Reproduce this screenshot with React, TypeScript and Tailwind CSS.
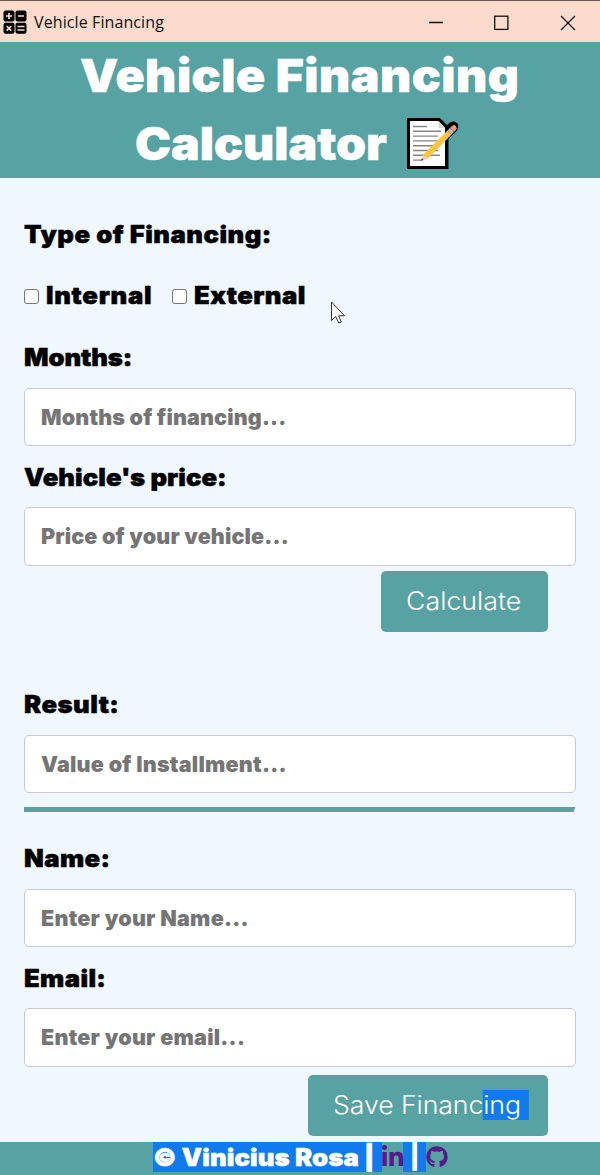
import type { ReactNode } from "react";
import { FaGithub, FaLinkedinIn } from "react-icons/fa";

function AppIcon() {
  return (
    <svg className="h-6 w-6 shrink-0" viewBox="0 0 24 24">
      <rect x="0.5" y="0.5" width="11" height="11" rx="2" />
      <rect x="12.5" y="0.5" width="11" height="11" rx="2" />
      <rect x="0.5" y="12.8" width="11" height="11" rx="2" />
      <rect x="12.5" y="12.8" width="11" height="11" rx="2" />
      <path
        d="M6 3v6M3 6h6M15 6h6M3.7 16l4.6 4.6M8.3 16l-4.6 4.6M14.500 16.5h7M14.500 20h7"
        stroke="#fbdbcb"
        strokeWidth="1.7"
        fill="none"
      />
    </svg>
  );
}

function MemoIcon() {
  return (
    <svg className="h-[54px] w-[54px] shrink-0" viewBox="0 0 54 54">
      <path d="M1 1H34L41 8L44 5.500Q48.500 3 51.500 6.500Q53.500 10.500 50.500 14L42.500 22V52H1Z" fill="#000" />
      <path d="M4 4H32.500L39 11V49H4Z" fill="#fff" />
      <path d="M32.500 4V11H39Z" fill="#d9d9d9" />
      <path
        d="M7 9.500H21M7 14.300H35M7 19.100H32M7 23.900H35M7 28.700H34M7 33.500H32M7 38.300H34M7 43.100H16"
        stroke="#858585"
        strokeWidth="1.400"
      />
      <path d="M17.200 37.800L41.500 13.500L45.500 17.500L21.800 41.800Z" fill="#fbc63c" />
      <path d="M15 43.800L17.200 37.800L21.800 41.800Z" fill="#f6c9b0" />
      <path d="M15 43.800L15.900 41.300L17.600 42.900Z" fill="#333" />
      <path d="M41.500 13.500L44 11L48 15L45.500 17.500Z" fill="#b9bcc0" />
      <path d="M44 11L46 9Q48.500 7 50 9.500Q51.500 11.500 50 13L48 15Z" fill="#f5927f" />
    </svg>
  );
}

/* Widened heavy face used for headings and labels. */
function Wide({ children, className = "" }: { children: ReactNode; className?: string }) {
  return (
    <span
      className={`inline-block origin-left scale-x-[1.07] whitespace-nowrap [-webkit-text-stroke:0.5px_currentColor] ${className}`}
    >
      {children}
    </span>
  );
}

function Label({ children, className }: { children: ReactNode; className: string }) {
  return (
    <div className={`flex items-center whitespace-nowrap text-[24px] font-black leading-[30px] text-black ${className}`}>
      {children}
    </div>
  );
}

function Field({ placeholder, className }: { placeholder: string; className: string }) {
  return (
    <input
      placeholder={placeholder}
      className={`block h-[58.5px] w-[551.5px] rounded-[5px] border border-[#c8cacd] bg-white px-4 text-[21.5px] font-black outline-none placeholder:text-[#757575] ${className}`}
    />
  );
}

function Checkbox() {
  return (
    <input
      type="checkbox"
      className="h-[15px] w-[15px] shrink-0 appearance-none rounded-[3px] border border-[#767676] bg-white"
    />
  );
}

export default function App() {
  return (
    <div className="relative flex h-[1175px] w-[600px] flex-col overflow-hidden bg-[#f0f7ff] font-['Inter',sans-serif]">
      <div className="flex h-[42px] items-center border-t border-[#6e5a54] bg-[#fbdbcb] pl-[3px]">
        <AppIcon />
        <span className="ml-[7px] font-['Open_Sans',sans-serif] text-[16px] tracking-[0.1px] text-[#111]">
          Vehicle Financing
        </span>
        <svg className="ml-auto mr-[24px] mt-[2px] h-4 w-[148px]" viewBox="0 0 148 16" fill="none" stroke="#111" strokeWidth="1.300">
          <path d="M1 7.500H15M133 1L147 15M147 1L133 15" />
          <rect x="66.700" y="1.200" width="13.200" height="13.200" />
        </svg>
      </div>

      <h1 className="flex h-[136px] flex-col bg-[#57a2a2] text-[45px] font-black leading-[68px] text-white">
        <Wide className="ml-[80px] self-start tracking-[0.46px]">Vehicle Financing</Wide>
        <span className="flex items-center pl-[135px]">
          <Wide className="w-[271px]">Calculator</Wide>
          <MemoIcon />
        </span>
      </h1>

      <form className="flex flex-col px-6 pt-[26px]">
        <Label className="h-[61px] pt-[1px]">
          <Wide className="tracking-[0.47px]">Type of Financing:</Wide>
        </Label>
        <Label className="h-[61px] pt-[1px]">
          <Checkbox />
          <Wide className="ml-[6.5px] w-[126.5px] tracking-[0.68px]">Internal</Wide>
          <Checkbox />
          <Wide className="ml-[6.5px] tracking-[0.47px]">External</Wide>
        </Label>
        <Label className="h-[61.5px] pt-[2px]">
          <Wide className="tracking-[-0.1px]">Months:</Wide>
        </Label>
        <Field placeholder="Months of financing..." className="tracking-[0.15px]" />
        <Label className="h-[61px] pt-[2px]">
          <Wide className="tracking-[0.05px]">Vehicle's price:</Wide>
        </Label>
        <Field placeholder="Price of your vehicle..." className="tracking-[0.15px]" />
        <button
          type="button"
          className="mr-[28px] mt-[5px] flex h-[61px] w-[167px] items-center self-end rounded-[5px] bg-[#57a2a2] pl-[25px] pt-[2px] text-[25px] font-light text-white"
        >
          <span className="inline-block origin-left scale-x-[1.07]">Calculate</span>
        </button>
        <Label className="mt-[41.5px] h-[61.5px] pt-[2px]">
          <Wide className="tracking-[0.45px]">Result:</Wide>
        </Label>
        <Field placeholder="Value of Installment..." className="tracking-[0.25px]" />
        <div className="mt-[14px] h-[5px] w-[551.5px] bg-[#57a2a2] [clip-path:polygon(0_0,100%_0,calc(100%-2px)_100%,0_100%)]" />
        <Label className="mt-[15px] h-[61.5px] pt-[2px]">
          <Wide className="tracking-[0.4px]">Name:</Wide>
        </Label>
        <Field placeholder="Enter your Name..." className="tracking-[0.25px]" />
        <Label className="h-[61px] pt-[2px]">
          <Wide className="tracking-[0.35px]">Email:</Wide>
        </Label>
        <Field placeholder="Enter your email..." className="tracking-[0.25px]" />
        <button
          type="button"
          className="mr-[28px] mt-[8px] flex h-[61px] w-[240px] items-center self-end rounded-[5px] bg-[#57a2a2] pl-[25px] text-[25px] font-light leading-[30px] text-white"
        >
          <span className="flex origin-left scale-x-[1.07] whitespace-pre tracking-[-0.12px]">
            <span>Save Financ</span>
            <span className="w-[43px] bg-[#117bee] text-left">ing</span>
          </span>
        </button>
      </form>

      <footer className="mt-auto flex h-[33px] items-start bg-[#57a2a2] pl-[153px] text-[24px] font-black leading-[30px] text-white">
        <span className="h-[30px] w-[229px] bg-[#117bee]">
          <Wide className="leading-[31px] tracking-[0.1px]">© Vinicius Rosa |</Wide>
        </span>
        <FaLinkedinIn className="mt-[3px] h-[24px] w-[21px] text-[#551a8b]" />
        <span className="w-[23px] bg-[#117bee] text-center">|</span>
        <FaGithub className="mt-[4px] h-[22px] w-[22px] text-[#551a8b]" />
      </footer>

      <svg className="absolute left-[330px] top-[301px] h-6 w-4" viewBox="0 0 16 24">
        <path
          d="M1.500 1V19.500L5.800 15.600L8.700 22L11.300 21L8.600 14.800H14.500Z"
          fill="#fff"
          stroke="#333"
          strokeWidth="1"
        />
      </svg>
    </div>
  );
}
